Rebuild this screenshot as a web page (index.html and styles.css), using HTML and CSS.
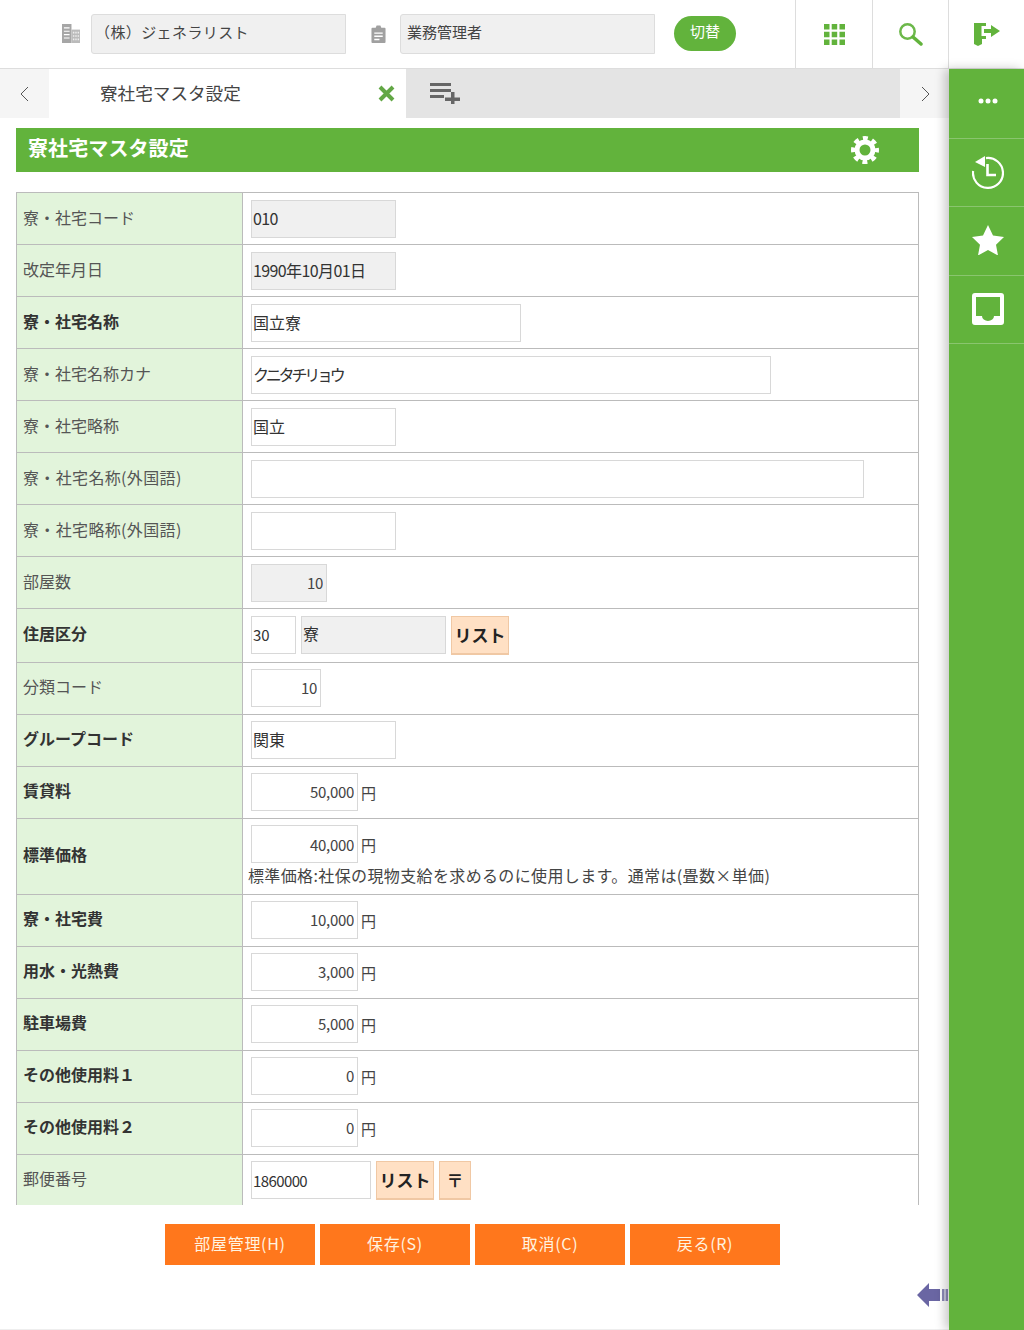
FILE: index.html
```html
<!DOCTYPE html>
<html lang="ja">
<head>
<meta charset="utf-8">
<title>寮社宅マスタ設定</title>
<link rel="stylesheet" href="styles.css">
</head>
<body>
<header class="topbar">
  <svg class="ico-building" viewBox="0 0 19 17" width="18" height="19" preserveAspectRatio="none"><path fill="#a6a6a6" d="M0 0h10v17H0z"/><path fill="#fff" d="M2 3h6v1H2zM2 6h6v1H2zM2 9h6v1H2zM2 12h6v1H2z"/><path fill="#bbb" d="M10 5h9v12h-9z"/><path fill="#eee" d="M11.500 7h1.500v1.500h-1.500zM14 7h1.500v1.500H14zM16.500 7H18v1.500h-1.500zM11.500 10h1.500v1.500h-1.500zM14 10h1.500v1.500H14zM16.500 10H18v1.500h-1.500zM11.500 13h1.500v1.500h-1.500zM14 13h1.500v1.500H14zM16.500 13H18v1.500h-1.500z"/></svg>
  <input class="top-input company" readonly value="（株）ジェネラリスト">
  <svg class="ico-clip" viewBox="0 0 16 17" width="15" height="18" preserveAspectRatio="none"><path fill="#a0a0a0" d="M1.500 2.500H5L6 .5h4l1 2h3.500a1 1 0 0 1 1 1V16a1 1 0 0 1-1 1h-13a1 1 0 0 1-1-1V3.500a1 1 0 0 1 1-1z"/><path fill="#fff" d="M3.500 7h9v1.300h-9zM3.500 10h9v1.300h-9zM3.500 13h5.500v1.300H3.500z"/></svg>
  <input class="top-input role" readonly value="業務管理者">
  <button class="switch">切替</button>
  <div class="top-actions">
    <div class="top-cell">
      <svg viewBox="0 0 21 21" width="21" height="21"><path fill="#62b33c" d="M0 0h5.500v5.500H0zM7.700 0h5.500v5.500H7.700zM15.500 0H21v5.500h-5.500zM0 7.700h5.500v5.500H0zM7.700 7.700h5.500v5.500H7.700zM15.500 7.700H21v5.500h-5.500zM0 15.500h5.500V21H0zM7.700 15.500h5.500V21H7.700zM15.500 15.500H21V21h-5.500z"/></svg>
    </div>
    <div class="top-cell">
      <svg viewBox="0 0 24 23" width="24" height="23"><circle cx="8.500" cy="8.500" r="7.200" fill="none" stroke="#6cb84a" stroke-width="2.500"/><path d="M14 14l8 7" stroke="#62b33c" stroke-width="3.500" stroke-linecap="round"/></svg>
    </div>
    <div class="top-cell">
      <svg viewBox="0 0 26 23" width="26" height="23"><path fill="#62b33c" d="M0 0h12v3H7.500v10H12v3H8v5l-4 2-4-2z"/><path fill="#62b33c" d="M10 6h7V2l9 6-9 6v-4h-7z"/></svg>
    </div>
  </div>
</header>

<div class="workspace">
  <main class="main">
    <nav class="tabs">
      <div class="tab-arrow"><svg viewBox="0 0 9 16" width="9" height="16"><path d="M8 1L1 8l7 7" fill="none" stroke="#555" stroke-width="1"/></svg></div>
      <div class="tab-active">
        <span class="tab-name">寮社宅マスタ設定</span>
        <svg viewBox="0 0 17 17" width="17" height="17"><path d="M2 2l13 13M15 2L2 15" stroke="#62a745" stroke-width="4"/></svg>
      </div>
      <div class="tab-rest">
        <svg viewBox="0 0 30 21" width="30" height="21"><path fill="#666" d="M0 0h21v3H0zM0 6h21v3H0zM0 12h14v3H0zM21 9h3.500v5.500H30V18h-5.500v4H21v-4h-6v-3.500h6z"/></svg>
      </div>
      <div class="tab-arrow next"><svg viewBox="0 0 9 16" width="9" height="16"><path d="M1 1l7 7-7 7" fill="none" stroke="#555" stroke-width="1"/></svg></div>
    </nav>

    <div class="title-bar">
      <h1>寮社宅マスタ設定</h1>
      <svg class="gear" viewBox="0 0 28 28" width="28" height="28"><circle cx="14" cy="14" r="8" fill="none" stroke="#fff" stroke-width="5"/><circle cx="14" cy="14" r="11.500" fill="none" stroke="#fff" stroke-width="5" stroke-dasharray="4.800 4.230" stroke-dashoffset="2.400"/></svg>
    </div>

    <div class="form-clip">
      <table class="form">
        <colgroup><col class="col-label"><col></colgroup>
        <tr><th>寮・社宅コード</th><td><input class="w145 ro digits" readonly value="010"></td></tr>
        <tr><th>改定年月日</th><td><input class="w145 ro digits" readonly value="1990年10月01日"></td></tr>
        <tr><th class="req">寮・社宅名称</th><td><input class="w270" value="国立寮"></td></tr>
        <tr><th>寮・社宅名称カナ</th><td><input class="w520 kana" value="クニタチリョウ"></td></tr>
        <tr><th>寮・社宅略称</th><td><input class="w145" value="国立"></td></tr>
        <tr><th class="wide">寮・社宅名称(外国語)</th><td><input class="w613" value=""></td></tr>
        <tr><th class="wide">寮・社宅略称(外国語)</th><td><input class="w145" value=""></td></tr>
        <tr><th>部屋数</th><td><input class="w76 ro num" readonly value="10"></td></tr>
        <tr class="tall"><th class="req">住居区分</th><td><div class="line"><input class="w45 small" value="30"><input class="w145 ro" readonly value="寮"><button class="list">リスト</button></div></td></tr>
        <tr><th>分類コード</th><td><input class="w70 num" value="10"></td></tr>
        <tr><th class="req">グループコード</th><td><input class="w145" value="関東"></td></tr>
        <tr><th class="req">賃貸料</th><td><input class="w107 num" value="50,000"><span class="yen">円</span></td></tr>
        <tr class="note-row"><th class="req">標準価格</th><td><input class="w107 num" value="40,000"><span class="yen">円</span><p class="note">標準価格:社保の現物支給を求めるのに使用します。通常は(畳数×単価)</p></td></tr>
        <tr><th class="req">寮・社宅費</th><td><input class="w107 num" value="10,000"><span class="yen">円</span></td></tr>
        <tr><th class="req">用水・光熱費</th><td><input class="w107 num" value="3,000"><span class="yen">円</span></td></tr>
        <tr><th class="req">駐車場費</th><td><input class="w107 num" value="5,000"><span class="yen">円</span></td></tr>
        <tr><th class="req">その他使用料１</th><td><input class="w107 num" value="0"><span class="yen">円</span></td></tr>
        <tr><th class="req">その他使用料２</th><td><input class="w107 num" value="0"><span class="yen">円</span></td></tr>
        <tr><th>郵便番号</th><td><div class="line zip-line"><input class="w120 small digits" value="1860000"><button class="list">リスト</button><button class="list zip">〒</button></div></td></tr>
      </table>
    </div>

    <div class="actions">
      <button class="act">部屋管理(H)</button>
      <button class="act">保存(S)</button>
      <button class="act">取消(C)</button>
      <button class="act">戻る(R)</button>
    </div>

    <svg class="back" viewBox="0 0 31 24" width="31" height="24"><path fill="#6a66a3" d="M0 12L12 0v6h11v12H12v6z"/><path fill="#8d8ab8" d="M25 6h2.500v12H25zM28.500 6H31v12h-2.500z"/></svg>
  </main>

  <aside class="side">
    <div class="side-item"><svg viewBox="0 0 20 6" width="20" height="6"><circle cx="3" cy="3" r="2.500" fill="#fff"/><circle cx="10" cy="3" r="2.500" fill="#fff"/><circle cx="17" cy="3" r="2.500" fill="#fff"/></svg></div>
    <div class="side-item"><svg viewBox="0 0 32 34" width="32" height="34"><path d="M14 2.100A15 15 0 1 1 1.100 15" fill="none" stroke="#fff" stroke-width="2.200"/><path fill="#fff" d="M3 6L13 0v11z"/><path d="M15.500 8v11h8.500" fill="none" stroke="#fff" stroke-width="2.600"/></svg></div>
    <div class="side-item"><svg viewBox="0 0 32 30" width="32" height="30"><path fill="#fff" d="M16 0l5 10.500 11 1.500-8 7.800 2 10.700-10-5.400-10 5.400 2-10.700-8-7.800 11-1.500z"/></svg></div>
    <div class="side-item"><svg viewBox="0 0 32 32" width="32" height="32"><path fill="#fff" fill-rule="evenodd" d="M3 0h26a3 3 0 0 1 3 3v26a3 3 0 0 1-3 3H3a3 3 0 0 1-3-3V3a3 3 0 0 1 3-3zM4 4v19h6a6 5 0 0 0 12 0h6V4z"/></svg></div>
  </aside>
</div>
</body>
</html>
```
FILE: styles.css
```css
* { box-sizing: border-box; }
html, body { margin: 0; padding: 0; }
body {
  width: 1024px;
  height: 1330px;
  overflow: hidden;
  background: #fff;
  color: #444;
  font-family: "Noto Sans CJK JP", "Noto Sans", sans-serif;
  font-size: 16px;
}
input, button { font-family: inherit; }

.topbar {
  height: 69px;
  display: flex;
  align-items: flex-start;
  padding-left: 62px;
  border-bottom: 1px solid #ddd;
  background: #fff;
}
.ico-building { margin: 24px 1px 0 0; }
.ico-clip { margin: 25px 14px 0 25px; }
.top-input {
  width: 255px;
  height: 40px;
  margin-top: 14px;
  border: 1px solid #ddd;
  border-radius: 3px 0 0 3px;
  background: #f0f0f0;
  color: #444;
  font-size: 15px;
  outline: none;
}
.company { margin-left: 10px; padding: 0 0 6px 3px; letter-spacing: 0.4px; }
.role { padding: 0 0 6px 6px; }
.switch {
  width: 62px;
  height: 35px;
  margin: 16px 0 0 19px;
  border: 0;
  border-radius: 18px;
  background: #62b33c;
  color: #fff;
  font-size: 15px;
  padding: 0 0 7px;
}
.top-actions { margin-left: auto; display: flex; }
.top-cell {
  width: 76px;
  height: 68px;
  border-left: 1px solid #ddd;
  display: flex;
  align-items: center;
  justify-content: center;
}
.top-cell:first-child { width: 77px; }
.top-cell:last-child { padding-left: 1px; }

.workspace { display: flex; height: 1261px; }
.main {
  position: relative;
  width: 949px;
  border-bottom: 1px solid #eee;
}
.tabs { height: 49px; display: flex; }
.tab-arrow {
  width: 49px;
  background: #f5f5f5;
  display: flex;
  align-items: center;
  justify-content: center;
}
.tab-arrow.next { padding-left: 2px; }
.tab-active {
  width: 357px;
  display: flex;
  align-items: center;
  justify-content: space-between;
  padding: 0 11px 0 51px;
  background: #fff;
  font-size: 17.6px;
}
.tab-name { position: relative; top: -1px; }
.tab-rest {
  flex: 1;
  background: #e4e4e4;
  padding: 14px 0 0 24px;
}
.tab-rest svg { display: block; }

.title-bar {
  display: flex;
  align-items: center;
  justify-content: space-between;
  height: 44px;
  width: 903px;
  margin: 10px 0 20px 16px;
  padding: 0 40px 0 12px;
  background: #62b33c;
}
.title-bar h1 {
  margin: 0 0 5px;
  color: #fff;
  font-size: 20px;
  font-weight: 700;
  letter-spacing: 0.1px;
}
.gear { display: block; }

.form-clip {
  width: 903px;
  height: 1013px;
  margin-left: 16px;
  overflow: hidden;
}
.form {
  width: 903px;
  table-layout: fixed;
  border-collapse: collapse;
}
.col-label { width: 226px; }
.form tr { height: 52px; }
.form tr.tall { height: 54px; }
.form tr.note-row { height: 76px; }
.form th, .form td {
  border: 1px solid #bbb;
  padding: 0;
  font-size: 16px;
  line-height: 24px;
}
.form th {
  background: #e2f4db;
  padding: 0 0 3px 6px;
  text-align: left;
  font-weight: 400;
  color: #555;
}
.form th.wide { letter-spacing: 0.35px; }
.form th.req { font-weight: 700; color: #333; }
.form tr:nth-child(n+9) th { padding-bottom: 5px; }
.form td { padding-left: 5px; }
.form tr:nth-child(n+10) td { padding-bottom: 2px; }
.form tr.note-row td { padding-bottom: 0; }
.form td > input { margin-left: 3px; }
.form input {
  height: 38px;
  padding: 0 1px 2px;
  border: 1px solid #d8d8d8;
  background: #fff;
  color: #333;
  font-size: 16px;
  vertical-align: middle;
  outline: none;
}
.form input.small { font-size: 15px; }
.form input.ro { background: #f0f0f0; }
.form input.num { text-align: right; padding: 0 3px 0 1px; font-size: 15px; letter-spacing: -0.3px; color: #444; }
.form input.digits { letter-spacing: -0.6px; }
.form input.kana { letter-spacing: -3.2px; }
.form .zip-line input { padding: 2px 1px 0; }
.form .line .ro { padding-bottom: 4px; }
.w45 { width: 45px; }
.w70 { width: 70px; }
.w76 { width: 76px; }
.w107 { width: 107px; }
.w120 { width: 120px; }
.w145 { width: 145px; }
.w270 { width: 270px; }
.w520 { width: 520px; }
.w613 { width: 613px; }
.yen { display: inline-block; margin-left: 3px; padding-top: 2px; vertical-align: middle; font-size: 15px; }
.note { margin: 0; color: #444; height: 24px; letter-spacing: 0.37px; }
.note-row td { vertical-align: top; padding-top: 6px; }
.line { display: flex; align-items: flex-start; gap: 5px; padding-left: 3px; }
.zip-line { align-items: center; }
.list {
  width: 58px;
  height: 39px;
  padding: 0 0 2px;
  border: 1px solid #f0c8a4;
  border-bottom-width: 2px;
  background: #ffe0c4;
  color: #222;
  font-size: 17px;
  font-weight: 700;
}
.zip-line .list { margin-top: 2px; }
.list.zip { width: 32px; }

.actions {
  display: flex;
  gap: 5px;
  padding-left: 165px;
  margin-top: 19px;
}
.act {
  width: 150px;
  height: 41px;
  border: 0;
  background: #ff771c;
  color: #fff3e0;
  font-size: 16px;
  letter-spacing: 0.7px;
  padding: 0 0 4px;
}
.back { position: absolute; right: 1px; top: 1214px; }

.side {
  width: 75px;
  background: #62b33c;
  box-shadow: -4px 0 10px rgba(0, 0, 0, 0.22);
  position: relative;
}
.side-item {
  height: 68px;
  border-bottom: 1px solid #8ac56f;
  display: flex;
  align-items: center;
  justify-content: center;
  padding-left: 3px;
}
.side-item:nth-child(1) { height: 70px; padding-bottom: 5px; }
.side-item:nth-child(3) { height: 69px; padding-bottom: 2px; }
.side-item:nth-child(4) { padding-bottom: 2px; }
```
